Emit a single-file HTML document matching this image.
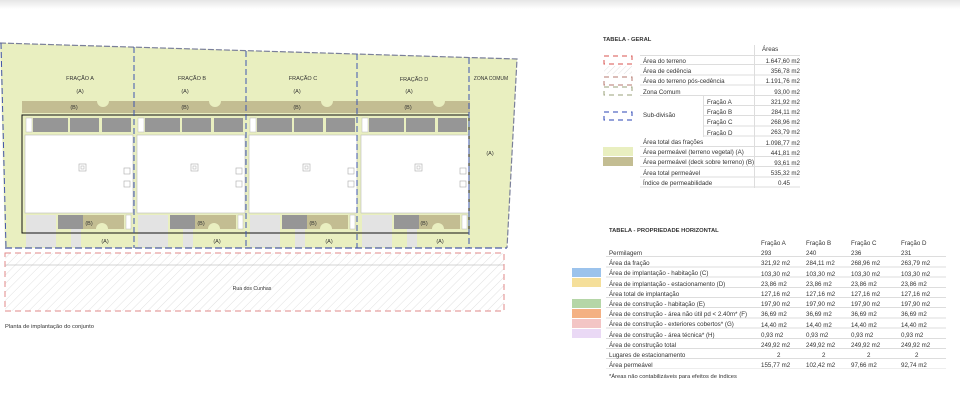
<!DOCTYPE html>
<html><head><meta charset="utf-8"><style>
*{margin:0;padding:0}
body{width:960px;height:415px;background:#fff;position:relative;overflow:hidden;font-family:"Liberation Sans",sans-serif;color:#333}
.t{position:absolute;font-size:6.2px;white-space:nowrap;line-height:1}
.h{font-weight:bold;font-size:5.8px}
.r{position:absolute;height:0;border-top:1px solid #ddd}
.sw{position:absolute}
</style></head><body>
<div style="position:absolute;left:0;top:0;width:960px;height:9px;background:linear-gradient(#e6e6e6,#fff)"></div>
<svg width="960" height="415" style="position:absolute;left:0;top:0" xmlns="http://www.w3.org/2000/svg" font-family="Liberation Sans" font-size="5.5" fill="#333">
<defs>
<pattern id="hat" width="6" height="6" patternUnits="userSpaceOnUse" patternTransform="rotate(45)"><line x1="0" y1="0" x2="0" y2="6" stroke="#ccc" stroke-width="0.6"/></pattern>
<g id="u">
<rect x="0" y="101" width="112" height="12" fill="#c3bd92"/>
<path d="M75 101 a6 6 0 0 0 12 0z" fill="#e9efc0"/>
<rect x="4" y="118" width="6" height="14" fill="#fff" stroke="#bbb" stroke-width=".5"/>
<rect x="11" y="118" width="35" height="14" fill="#969696"/>
<rect x="48" y="118" width="29" height="14" fill="#969696"/>
<rect x="80" y="118" width="29" height="14" fill="#969696"/>
<rect x="3" y="135" width="108" height="78" fill="#fff" stroke="#bbb" stroke-width=".6"/>
<rect x="57" y="164" width="7" height="7" fill="none" stroke="#aaa" stroke-width=".6"/>
<rect x="59" y="166" width="3" height="3" fill="none" stroke="#aaa" stroke-width=".5"/>
<rect x="102" y="168" width="6" height="6" fill="none" stroke="#aaa" stroke-width=".6"/>
<rect x="102" y="181" width="6" height="6" fill="none" stroke="#aaa" stroke-width=".6"/>
<rect x="4" y="215" width="30" height="14" fill="#e3e3e3"/>
<rect x="36" y="215" width="25" height="14" fill="#969696"/>
<rect x="61" y="215" width="41" height="14" fill="#c3bd92"/>
<path d="M74 229 a6 6 0 0 1 12 0z" fill="#e9efc0"/>
<rect x="104" y="215" width="5" height="14" fill="#fff" stroke="#bbb" stroke-width=".5"/>
<rect x="4" y="229" width="30" height="18" fill="#e3e3e3"/>
<rect x="49" y="229" width="10" height="18" fill="#e3e3e3"/>
</g>
</defs>
<polygon points="0,43 517,59 507,248 5,248" fill="#e9efc0"/>
<polyline points="0,43 517,59 507,248" fill="none" stroke="#7a7f9a" stroke-width="1.2" stroke-dasharray="6,2"/>
<line x1="1" y1="43" x2="6" y2="248" stroke="#4455aa" stroke-width="1" stroke-dasharray="6,3"/>
<line x1="5" y1="248" x2="507" y2="248" stroke="#4a5aa8" stroke-width="1.3" stroke-dasharray="7,3"/>
<use href="#u" x="22"/><use href="#u" x="134"/><use href="#u" x="246"/><use href="#u" x="358"/>
<rect x="22" y="115" width="447" height="118" fill="none" stroke="#111" stroke-width="1"/>
<g stroke="#3d55b0" stroke-width="1" stroke-dasharray="6,3">
<line x1="134" y1="47" x2="134" y2="248"/><line x1="246" y1="51" x2="246" y2="248"/><line x1="357" y1="54" x2="357" y2="248"/><line x1="469" y1="58" x2="469" y2="248"/>
</g>
<g text-anchor="middle">
<text x="80" y="80">FRAÇÃO A</text><text x="192" y="80">FRAÇÃO B</text><text x="303" y="80">FRAÇÃO C</text><text x="414" y="81">FRAÇÃO D</text><text x="491" y="80" font-size="5">ZONA COMUM</text>
<text x="80" y="93">(A)</text><text x="185" y="93">(A)</text><text x="297" y="93">(A)</text><text x="409" y="93">(A)</text>
<text x="74" y="109">(B)</text><text x="185" y="109">(B)</text><text x="297" y="109">(B)</text><text x="408" y="109">(B)</text>
<text x="89" y="225">(B)</text><text x="201" y="225">(B)</text><text x="313" y="225">(B)</text><text x="424" y="225">(B)</text>
<text x="105" y="243">(A)</text><text x="217" y="243">(A)</text><text x="329" y="243">(A)</text><text x="440" y="243">(A)</text>
<text x="490" y="155">(A)</text>
</g>
<rect x="5" y="253" width="499" height="58" fill="url(#hat)"/>
<line x1="5" y1="265" x2="504" y2="265" stroke="#aaa" stroke-width=".6"/>
<rect x="5" y="253" width="499" height="58" fill="none" stroke="#e08a8a" stroke-width="1" stroke-dasharray="6,4"/>
<text x="252" y="290" text-anchor="middle" font-size="5.2">Rua dos Cunhas</text>
<text x="5" y="328" font-size="5.8">Planta de implantação do conjunto</text>
</svg>

<!-- Tabela geral -->
<div class="t h" style="left:603px;top:38px">TABELA - GERAL</div>
<div class="t" style="left:762px;top:47px">Áreas</div>
<div class="r" style="left:640px;top:55px;width:160px"></div>
<svg class="sw" style="left:603px;top:55px" width="30" height="130">
<defs><pattern id="h2" width="4" height="4" patternUnits="userSpaceOnUse" patternTransform="rotate(45)"><line x1="0" y1="0" x2="0" y2="4" stroke="#ccc" stroke-width="0.6"/></pattern></defs>
<g fill="none" stroke-width="1" stroke-dasharray="5,4">
<rect x="1" y="1" width="28" height="8" stroke="#d9534f"/>
<rect x="1" y="11" width="28" height="8" stroke="none" fill="url(#h2)"/>
<rect x="1" y="22" width="28" height="8" stroke="#b57a6f"/>
<rect x="1" y="32" width="28" height="8" stroke="#9aa07a"/>
<rect x="1" y="57" width="28" height="8" stroke="#2b44b5"/>
</g>
<rect x="0" y="92" width="30" height="9" fill="#e9efc0"/>
<rect x="0" y="102" width="30" height="9" fill="#c3bd92"/>
</svg>
<div style="position:absolute;left:643px;top:57px;font-size:6.2px;line-height:10.2px">
Área do terreno<br>Área de cedência<br>Área do terreno pós-cedência<br>Zona Comum</div>
<div class="t" style="left:643px;top:113px">Sub-divisão</div>
<div style="position:absolute;left:643px;top:138px;font-size:6.2px;line-height:10.2px">Área total das frações<br>Área permeável (terreno vegetal) (A)<br>Área permeável (deck sobre terreno) (B)<br>Área total permeável<br>Índice de permeabilidade</div>
<div style="position:absolute;left:707px;top:98px;font-size:6.2px;line-height:10.2px">Fração A<br>Fração B<br>Fração C<br>Fração D</div>
<div style="position:absolute;left:744px;width:56px;text-align:right;top:57px;font-size:6.2px;line-height:10.2px">1.647,60 m2<br>356,78 m2<br>1.191,76 m2<br>93,00 m2<br>321,92 m2<br>284,11 m2<br>268,96 m2<br>263,79 m2<br>1.098,77 m2<br>441,81 m2<br>93,61 m2<br>535,32 m2<br><span style="margin-right:10px">0.45</span></div>
<div style="position:absolute;left:640px;top:55px;width:160px;height:133px;background:repeating-linear-gradient(transparent 0 9.2px,#ddd 9.2px 10.2px)"></div>
<div style="position:absolute;left:640px;top:96px;width:63px;height:42px;background:#fff"></div>
<div class="t" style="left:643px;top:113px">Sub-divisão</div>
<div style="position:absolute;left:703px;top:96px;height:41px;border-left:1px solid #ddd"></div>
<div style="position:absolute;left:754px;top:45px;height:143px;border-left:1px solid #ddd"></div>

<!-- Tabela propriedade horizontal -->
<div class="t h" style="left:609px;top:229px">TABELA - PROPRIEDADE HORIZONTAL</div>
<div style="position:absolute;left:572px;top:268px;width:29px">
<div style="height:9px;background:#9cc3ec;margin-bottom:1.2px"></div>
<div style="height:9px;background:#f5df9a;margin-bottom:11.4px"></div>
<div style="height:9px;background:#b5d6a7;margin-bottom:1.2px"></div>
<div style="height:9px;background:#f4b183;margin-bottom:1.2px"></div>
<div style="height:9px;background:#f3c5c5;margin-bottom:1.2px"></div>
<div style="height:9px;background:#ead9f5;border:0"></div>
</div>
<div style="position:absolute;left:606px;top:247px;width:340px;height:122px;background:repeating-linear-gradient(transparent 0 9.2px,#ddd 9.2px 10.2px)"></div>
<div style="position:absolute;left:609px;top:249px;font-size:6.2px;line-height:10.2px">Permilagem<br>Área da fração<br>Área de implantação - habitação (C)<br>Área de implantação - estacionamento (D)<br>Área total de implantação<br>Área de construção - habitação (E)<br>Área de construção - área não útil pd &lt; 2.40m* (F)<br>Área de construção - exteriores cobertos* (G)<br>Área de construção - área técnica* (H)<br>Área de construção total<br>Lugares de estacionamento<br>Área permeável</div>
<div style="position:absolute;left:761px;top:239px;font-size:6.2px;line-height:10.2px">Fração A<br>293<br>321,92 m2<br>103,30 m2<br>23,86 m2<br>127,16 m2<br>197,90 m2<br>36,69 m2<br>14,40 m2<br>0,93 m2<br>249,92 m2<br><span style="margin-left:16px">2</span><br>155,77 m2</div>
<div style="position:absolute;left:806px;top:239px;font-size:6.2px;line-height:10.2px">Fração B<br>240<br>284,11 m2<br>103,30 m2<br>23,86 m2<br>127,16 m2<br>197,90 m2<br>36,69 m2<br>14,40 m2<br>0,93 m2<br>249,92 m2<br><span style="margin-left:16px">2</span><br>102,42 m2</div>
<div style="position:absolute;left:851px;top:239px;font-size:6.2px;line-height:10.2px">Fração C<br>236<br>268,96 m2<br>103,30 m2<br>23,86 m2<br>127,16 m2<br>197,90 m2<br>36,69 m2<br>14,40 m2<br>0,93 m2<br>249,92 m2<br><span style="margin-left:16px">2</span><br>97,66 m2</div>
<div style="position:absolute;left:901px;top:239px;font-size:6.2px;line-height:10.2px">Fração D<br>231<br>263,79 m2<br>103,30 m2<br>23,86 m2<br>127,16 m2<br>197,90 m2<br>36,69 m2<br>14,40 m2<br>0,93 m2<br>249,92 m2<br><span style="margin-left:14px">2</span><br>92,74 m2</div>
<div class="t" style="left:609px;top:375px;font-size:5.8px">*Áreas não contabilizáveis para efeitos de índices</div>
</body></html>
